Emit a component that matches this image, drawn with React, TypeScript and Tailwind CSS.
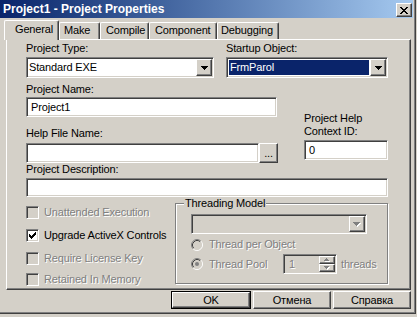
import React from "react";

const sunken =
  "border border-t-[#808080] border-l-[#808080] border-r-white border-b-white shadow-[inset_1px_1px_0_#404040,inset_-1px_-1px_0_#d4d0c8]";
const raised =
  "border border-t-white border-l-white border-r-[#404040] border-b-[#404040] shadow-[inset_-1px_-1px_0_#808080]";
const grayText = "text-[#808080] [text-shadow:1px_1px_0_#fff]";

const CLOSE = [
  "##....##",
  ".##..##.",
  "..####..",
  "...##...",
  "..####..",
  ".##..##.",
  "##....##",
];

const CHECK = [
  "......#",
  ".....##",
  "#...###",
  "##.###.",
  "#####..",
  ".###...",
  "..#....",
];

const DOWN = ["#######", ".#####.", "..###..", "...#..."];
const SMALL_UP = ["..#..", ".###.", "#####"];
const SMALL_DOWN = ["#####", ".###.", "..#.."];

function Pixels({
  rows,
  color,
  shadow,
}: {
  rows: string[];
  color: string;
  shadow?: string;
}) {
  const w = rows[0].length + (shadow ? 1 : 0);
  const h = rows.length + (shadow ? 1 : 0);
  const cells: React.ReactNode[] = [];
  rows.forEach((r, y) =>
    r.split("").forEach((c, x) => {
      if (c !== "#") return;
      if (shadow)
        cells.push(
          <rect key={`s${x}-${y}`} x={x + 1} y={y + 1} width={1} height={1} fill={shadow} />
        );
    })
  );
  rows.forEach((r, y) =>
    r.split("").forEach((c, x) => {
      if (c === "#")
        cells.push(<rect key={`${x}-${y}`} x={x} y={y} width={1} height={1} fill={color} />);
    })
  );
  return (
    <svg width={w} height={h} shapeRendering="crispEdges">
      {cells}
    </svg>
  );
}

function Combo({
  className,
  value,
  selected,
  disabled,
}: {
  className: string;
  value?: string;
  selected?: boolean;
  disabled?: boolean;
}) {
  return (
    <div
      className={`${sunken} ${className} p-[1px] flex ${
        disabled ? "bg-[#d4d0c8]" : "bg-white"
      }`}
    >
      <div className="flex-1 min-w-0 p-[1px] flex">
        <div
          className={`flex-1 flex items-center whitespace-nowrap ${
            selected ? "bg-[#0a246a] text-white pl-[1px]" : ""
          }`}
        >
          {value}
        </div>
      </div>
      <div
        className={`${raised} w-[16px] bg-[#d4d0c8] flex items-center justify-center`}
      >
        {disabled ? (
          <Pixels rows={DOWN} color="#808080" shadow="#fff" />
        ) : (
          <Pixels rows={DOWN} color="#000" />
        )}
      </div>
    </div>
  );
}

function Field({ className, value }: { className: string; value?: string }) {
  return (
    <div
      className={`${sunken} ${className} bg-white flex items-center pl-[4px] whitespace-nowrap`}
    >
      {value}
    </div>
  );
}

function Check({
  label,
  checked,
  disabled,
  className = "",
}: {
  label: string;
  checked?: boolean;
  disabled?: boolean;
  className?: string;
}) {
  return (
    <div className={`flex items-center h-[13px] ${className}`}>
      <div
        className={`${sunken} w-[13px] h-[13px] shrink-0 flex items-center justify-center ${
          disabled ? "bg-[#d4d0c8]" : "bg-white"
        }`}
      >
        {checked && <Pixels rows={CHECK} color="#000" />}
      </div>
      <span className={`ml-[5px] whitespace-nowrap ${disabled ? grayText : ""}`}>
        {label}
      </span>
    </div>
  );
}

function Radio({ selected }: { selected?: boolean }) {
  return (
    <svg width="12" height="12" viewBox="0 0 12 12" className="shrink-0">
      <circle cx="6" cy="6" r="5" fill="#d4d0c8" />
      <path d="M2.11 9.89A5.5 5.5 0 0 1 9.89 2.11" stroke="#808080" fill="none" />
      <path d="M9.89 2.11A5.5 5.5 0 0 1 2.11 9.89" stroke="#fff" fill="none" />
      <path d="M2.82 9.18A4.5 4.5 0 0 1 9.18 2.82" stroke="#404040" fill="none" />
      <path d="M9.18 2.82A4.5 4.5 0 0 1 2.82 9.18" stroke="#d4d0c8" fill="none" />
      {selected && <circle cx="6" cy="6" r="2" fill="#808080" />}
    </svg>
  );
}

function Tab({
  label,
  width,
  pad,
}: {
  label: string;
  width: string;
  pad: string;
}) {
  return (
    <div
      className={`${width} ${pad} h-[17px] pt-[1px] border-t border-l border-r border-t-white border-l-white border-r-[#404040] shadow-[inset_-1px_0_0_#808080] rounded-t-[2px] whitespace-nowrap`}
    >
      {label}
    </div>
  );
}

function Button({ label, isDefault }: { label: string; isDefault?: boolean }) {
  if (isDefault) {
    return (
      <div className="w-[80px] h-[18px] border border-black">
        <div className={`${raised} h-full flex items-center justify-center`}>
          {label}
        </div>
      </div>
    );
  }
  return (
    <div className={`${raised} w-[78px] h-[18px] flex items-center justify-center`}>
      {label}
    </div>
  );
}

export default function App() {
  return (
    <div className="w-[417px] h-[317px] overflow-hidden bg-[#d4d0c8] text-black font-['Liberation_Sans',Arial,sans-serif] text-[11px] leading-[13px] tracking-[-0.15px]">
      <div className="w-[416px] h-[314px] border-r border-b border-[#404040] shadow-[inset_-1px_-1px_0_#808080] flex flex-col">
        {/* title bar */}
        <div className="h-[18px] mr-[2px] bg-linear-to-r from-[#0a246a] to-[#a6caf0] flex justify-between pl-[3px] pr-[1px]">
          <span className="text-white font-bold text-[12px] leading-[18px] tracking-normal">
            Project1 - Project Properties
          </span>
          <div
            className={`${raised} mt-[3px] w-[16px] h-[14px] bg-[#d4d0c8] flex items-center justify-center`}
          >
            <Pixels rows={CLOSE} color="#000" />
          </div>
        </div>

        {/* tabs */}
        <div className="relative z-10 mt-[2px] h-[19px] pl-[4px] flex items-end">
          <div className="w-[55px] h-[20px] -mb-[1px] pl-[10px] pt-[2px] bg-[#d4d0c8] border-t border-l border-r border-t-white border-l-white border-r-[#404040] shadow-[inset_-1px_0_0_#808080] rounded-t-[2px]">
            General
          </div>
          <Tab label="Make" width="w-[41px]" pad="pl-[4px]" />
          <Tab label="Compile" width="w-[49px]" pad="pl-[5px]" />
          <Tab label="Component" width="w-[68px]" pad="pl-[5px]" />
          <Tab label="Debugging" width="w-[62px]" pad="pl-[3px]" />
        </div>

        {/* tab page */}
        <div className="ml-[6px] w-[405px] h-[251px] border border-t-white border-l-white border-r-[#404040] border-b-[#404040] shadow-[inset_-1px_-1px_0_#808080]">
          <div className="pl-[19px] pt-[2px] flex flex-col">
            <div className="flex gap-[12px]">
              <div className="w-[188px] flex flex-col">
                <span className="h-[13px]">Project Type:</span>
                <Combo className="mt-[2px] w-[188px] h-[21px]" value="Standard EXE" />
              </div>
              <div className="w-[162px] flex flex-col">
                <span className="h-[13px]">Startup Object:</span>
                <Combo className="mt-[2px] w-[162px] h-[21px]" value="FrmParol" selected />
              </div>
            </div>

            <div className="mt-[5px] flex">
              <div className="w-[252px] flex flex-col">
                <span className="h-[13px]">Project Name:</span>
                <Field className="mt-[1px] w-[251px] h-[20px]" value="Project1" />
                <span className="mt-[10px] h-[13px]">Help File Name:</span>
                <div className="mt-[3px] flex">
                  <Field className="w-[233px] h-[20px]" />
                  <div
                    className={`${raised} w-[19px] h-[20px] flex items-center justify-center`}
                  >
                    ...
                  </div>
                </div>
              </div>
              <div className="ml-[26px] w-[84px] pt-[29px] flex flex-col">
                <span className="h-[13px] whitespace-nowrap">Project Help</span>
                <span className="h-[13px] whitespace-nowrap">Context ID:</span>
                <Field className="mt-[2px] w-[84px] h-[20px]" value="0" />
              </div>
            </div>

            <span className="h-[12px] leading-[12px]">Project Description:</span>
            <Field className="mt-[3px] w-[362px] h-[19px]" />

            <div className="flex">
              <div className="w-[149px] pt-[9px] flex flex-col">
                <Check label="Unattended Execution" disabled />
                <Check label="Upgrade ActiveX Controls" checked className="mt-[10px]" />
                <Check label="Require License Key" disabled className="mt-[10px]" />
                <Check label="Retained In Memory" disabled className="mt-[8px]" />
              </div>

              <div className="mt-[6px] w-[213px] h-[81px] border border-[#808080] shadow-[inset_1px_1px_0_#fff,1px_1px_0_#fff] flex flex-col">
                <span className="-mt-[7px] ml-[8px] px-[1px] h-[13px] self-start bg-[#d4d0c8] whitespace-nowrap">
                  Threading Model
                </span>
                <Combo className="mt-[4px] ml-[15px] w-[176px] h-[20px]" disabled />
                <div className="mt-[4px] ml-[15px] h-[13px] flex items-center">
                  <Radio />
                  <span className={`ml-[6px] whitespace-nowrap ${grayText}`}>
                    Thread per Object
                  </span>
                </div>
                <div className="mt-[3px] ml-[15px] h-[20px] flex items-center">
                  <Radio selected />
                  <span className={`ml-[6px] w-[74px] whitespace-nowrap ${grayText}`}>
                    Thread Pool
                  </span>
                  <div className={`${sunken} w-[54px] h-[20px] p-[1px] flex bg-[#d4d0c8]`}>
                    <span className={`flex-1 flex items-center pl-[4px] ${grayText}`}>1</span>
                    <div className="w-[16px] flex flex-col">
                      <div
                        className={`${raised} flex-1 bg-[#d4d0c8] flex items-center justify-center`}
                      >
                        <Pixels rows={SMALL_UP} color="#808080" shadow="#fff" />
                      </div>
                      <div
                        className={`${raised} flex-1 bg-[#d4d0c8] flex items-center justify-center`}
                      >
                        <Pixels rows={SMALL_DOWN} color="#808080" shadow="#fff" />
                      </div>
                    </div>
                  </div>
                  <span className={`ml-[4px] whitespace-nowrap ${grayText}`}>threads</span>
                </div>
              </div>
            </div>
          </div>
        </div>

        {/* buttons */}
        <div className="mt-[1px] pr-[4px] flex justify-end gap-[2px]">
          <Button label="OK" isDefault />
          <Button label="Отмена" />
          <Button label="Справка" />
        </div>
      </div>
    </div>
  );
}
